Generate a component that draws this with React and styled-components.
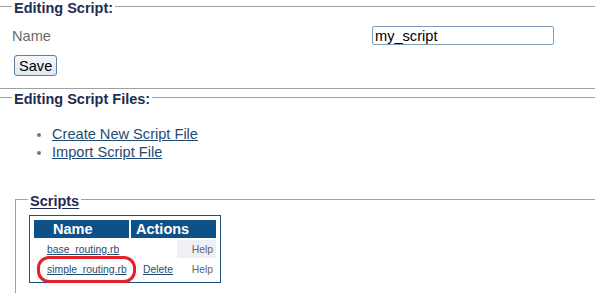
import React from "react";
import styled, { createGlobalStyle } from "styled-components";

const Global = createGlobalStyle`
  html, body { margin: 0; padding: 0; background: #fff; }
  body { font-family: "Liberation Sans", Arial, sans-serif; overflow: hidden; }
`;

const Page = styled.div`
  width: 595px;
`;

const Section = styled.fieldset`
  margin: ${(p) => p.$mt || 0}px 0 0 0;
  padding: ${(p) => p.$pt || 0}px 0 ${(p) => p.$pb || 0}px 12px;
  border: none;
  border-top: 1px solid #a0a0a0;
  border-bottom: 1px solid #a0a0a0;
  min-width: 0;
`;

const Legend = styled.legend`
  padding: 4px 2px 0;
  margin: 0;
  font-size: 14.5px;
  line-height: 16px;
  font-weight: bold;
  color: #1e2d52;
  text-decoration: ${(p) => (p.$underline ? "underline" : "none")};
  text-underline-offset: 2px;
`;

const NameRow = styled.div`
  display: grid;
  grid-template-columns: 360px 182px;
  align-items: center;
`;

const Label = styled.label`
  font-size: 14.6px;
  color: #6b6b6b;
`;

const TextInput = styled.input`
  box-sizing: border-box;
  width: 182px;
  height: 19px;
  border: 1px solid #7f9db9;
  border-radius: 2px;
  padding: 0 2px;
  font-family: "Liberation Sans", Arial, sans-serif;
  font-size: 14.6px;
  color: #000;
  outline: none;
`;

const Button = styled.button`
  display: block;
  margin: 10px 0 0 2px;
  box-sizing: border-box;
  height: 21px;
  padding: 0 4px;
  border: 1px solid #5f7f9c;
  border-radius: 3px;
  background: linear-gradient(#f4f7fa, #dfe7ef);
  font-family: "Liberation Sans", Arial, sans-serif;
  font-size: 14.6px;
  color: #000;
`;

const List = styled.ul`
  margin: 0;
  padding: 0 0 0 40px;
  font-size: 14.6px;
  line-height: 18px;
  color: #777;
`;

const Link = styled.a`
  color: #1f4b73;
  text-decoration: underline;
  cursor: pointer;
`;

const SubSection = styled.fieldset`
  margin: 28px 0 0 3px;
  padding: 6px 0 8px 12px;
  border: 1px solid #a0a0a0;
  border-right: none;
  min-width: 0;
`;

const TableBox = styled.div`
  display: inline-block;
  margin-left: 1px;
  border: 1px solid #1f4e79;
  padding: 2px;
`;

const Table = styled.table`
  border-collapse: separate;
  border-spacing: 2px;
  table-layout: fixed;
  width: 186px;
  font-size: 10.4px;
`;

const Th = styled.th`
  box-sizing: border-box;
  height: 18px;
  padding: 0 0 0 ${(p) => p.$pl}px;
  background: #0d5189;
  color: #fff;
  font-size: 14.5px;
  font-weight: bold;
  text-align: left;
  white-space: nowrap;
  overflow: hidden;
`;

const Td = styled.td`
  position: relative;
  box-sizing: border-box;
  height: 18px;
  padding: 0 ${(p) => p.$pr || 0}px 0 ${(p) => p.$pl || 0}px;
  text-align: ${(p) => p.$align || "left"};
  background: ${(p) => (p.$shade ? "#eef0f4" : "transparent")};
  color: #666;
  white-space: nowrap;
`;

const Highlight = styled.span`
  position: absolute;
  left: 3px;
  top: -4px;
  width: 99px;
  height: 27px;
  box-sizing: border-box;
  border: 3.5px solid #e3212b;
  border-radius: 12px;
  pointer-events: none;
`;

const rows = [
  { name: "base_routing.rb", del: false, marked: false },
  { name: "simple_routing.rb", del: true, marked: true },
];

export default function App() {
  return (
    <Page>
      <Global />
      <Section $mt={-4} $pt={10} $pb={12}>
        <Legend>Editing Script:</Legend>
        <NameRow>
          <Label>Name</Label>
          <TextInput defaultValue="my_script" />
        </NameRow>
        <Button>Save</Button>
      </Section>
      <Section $mt={-2} $pt={18} $pb={20}>
        <Legend>Editing Script Files:</Legend>
        <List>
          <li><Link>Create New Script File</Link></li>
          <li><Link>Import Script File</Link></li>
        </List>
        <SubSection>
          <Legend $underline>Scripts</Legend>
          <TableBox>
            <Table>
              <colgroup>
                <col style={{ width: 95 }} />
                <col style={{ width: 44 }} />
                <col style={{ width: 39 }} />
              </colgroup>
              <thead>
                <tr>
                  <Th $pl={19}>Name</Th>
                  <Th $pl={5} colSpan={2}>Actions</Th>
                </tr>
              </thead>
              <tbody>
                {rows.map((r) => (
                  <tr key={r.name}>
                    <Td $pl={13}>
                      <Link>{r.name}</Link>
                      {r.marked && <Highlight />}
                    </Td>
                    <Td $pl={12}>{r.del && <Link>Delete</Link>}</Td>
                    <Td $align="right" $pr={3} $shade={!r.del}>Help</Td>
                  </tr>
                ))}
              </tbody>
            </Table>
          </TableBox>
        </SubSection>
      </Section>
    </Page>
  );
}
